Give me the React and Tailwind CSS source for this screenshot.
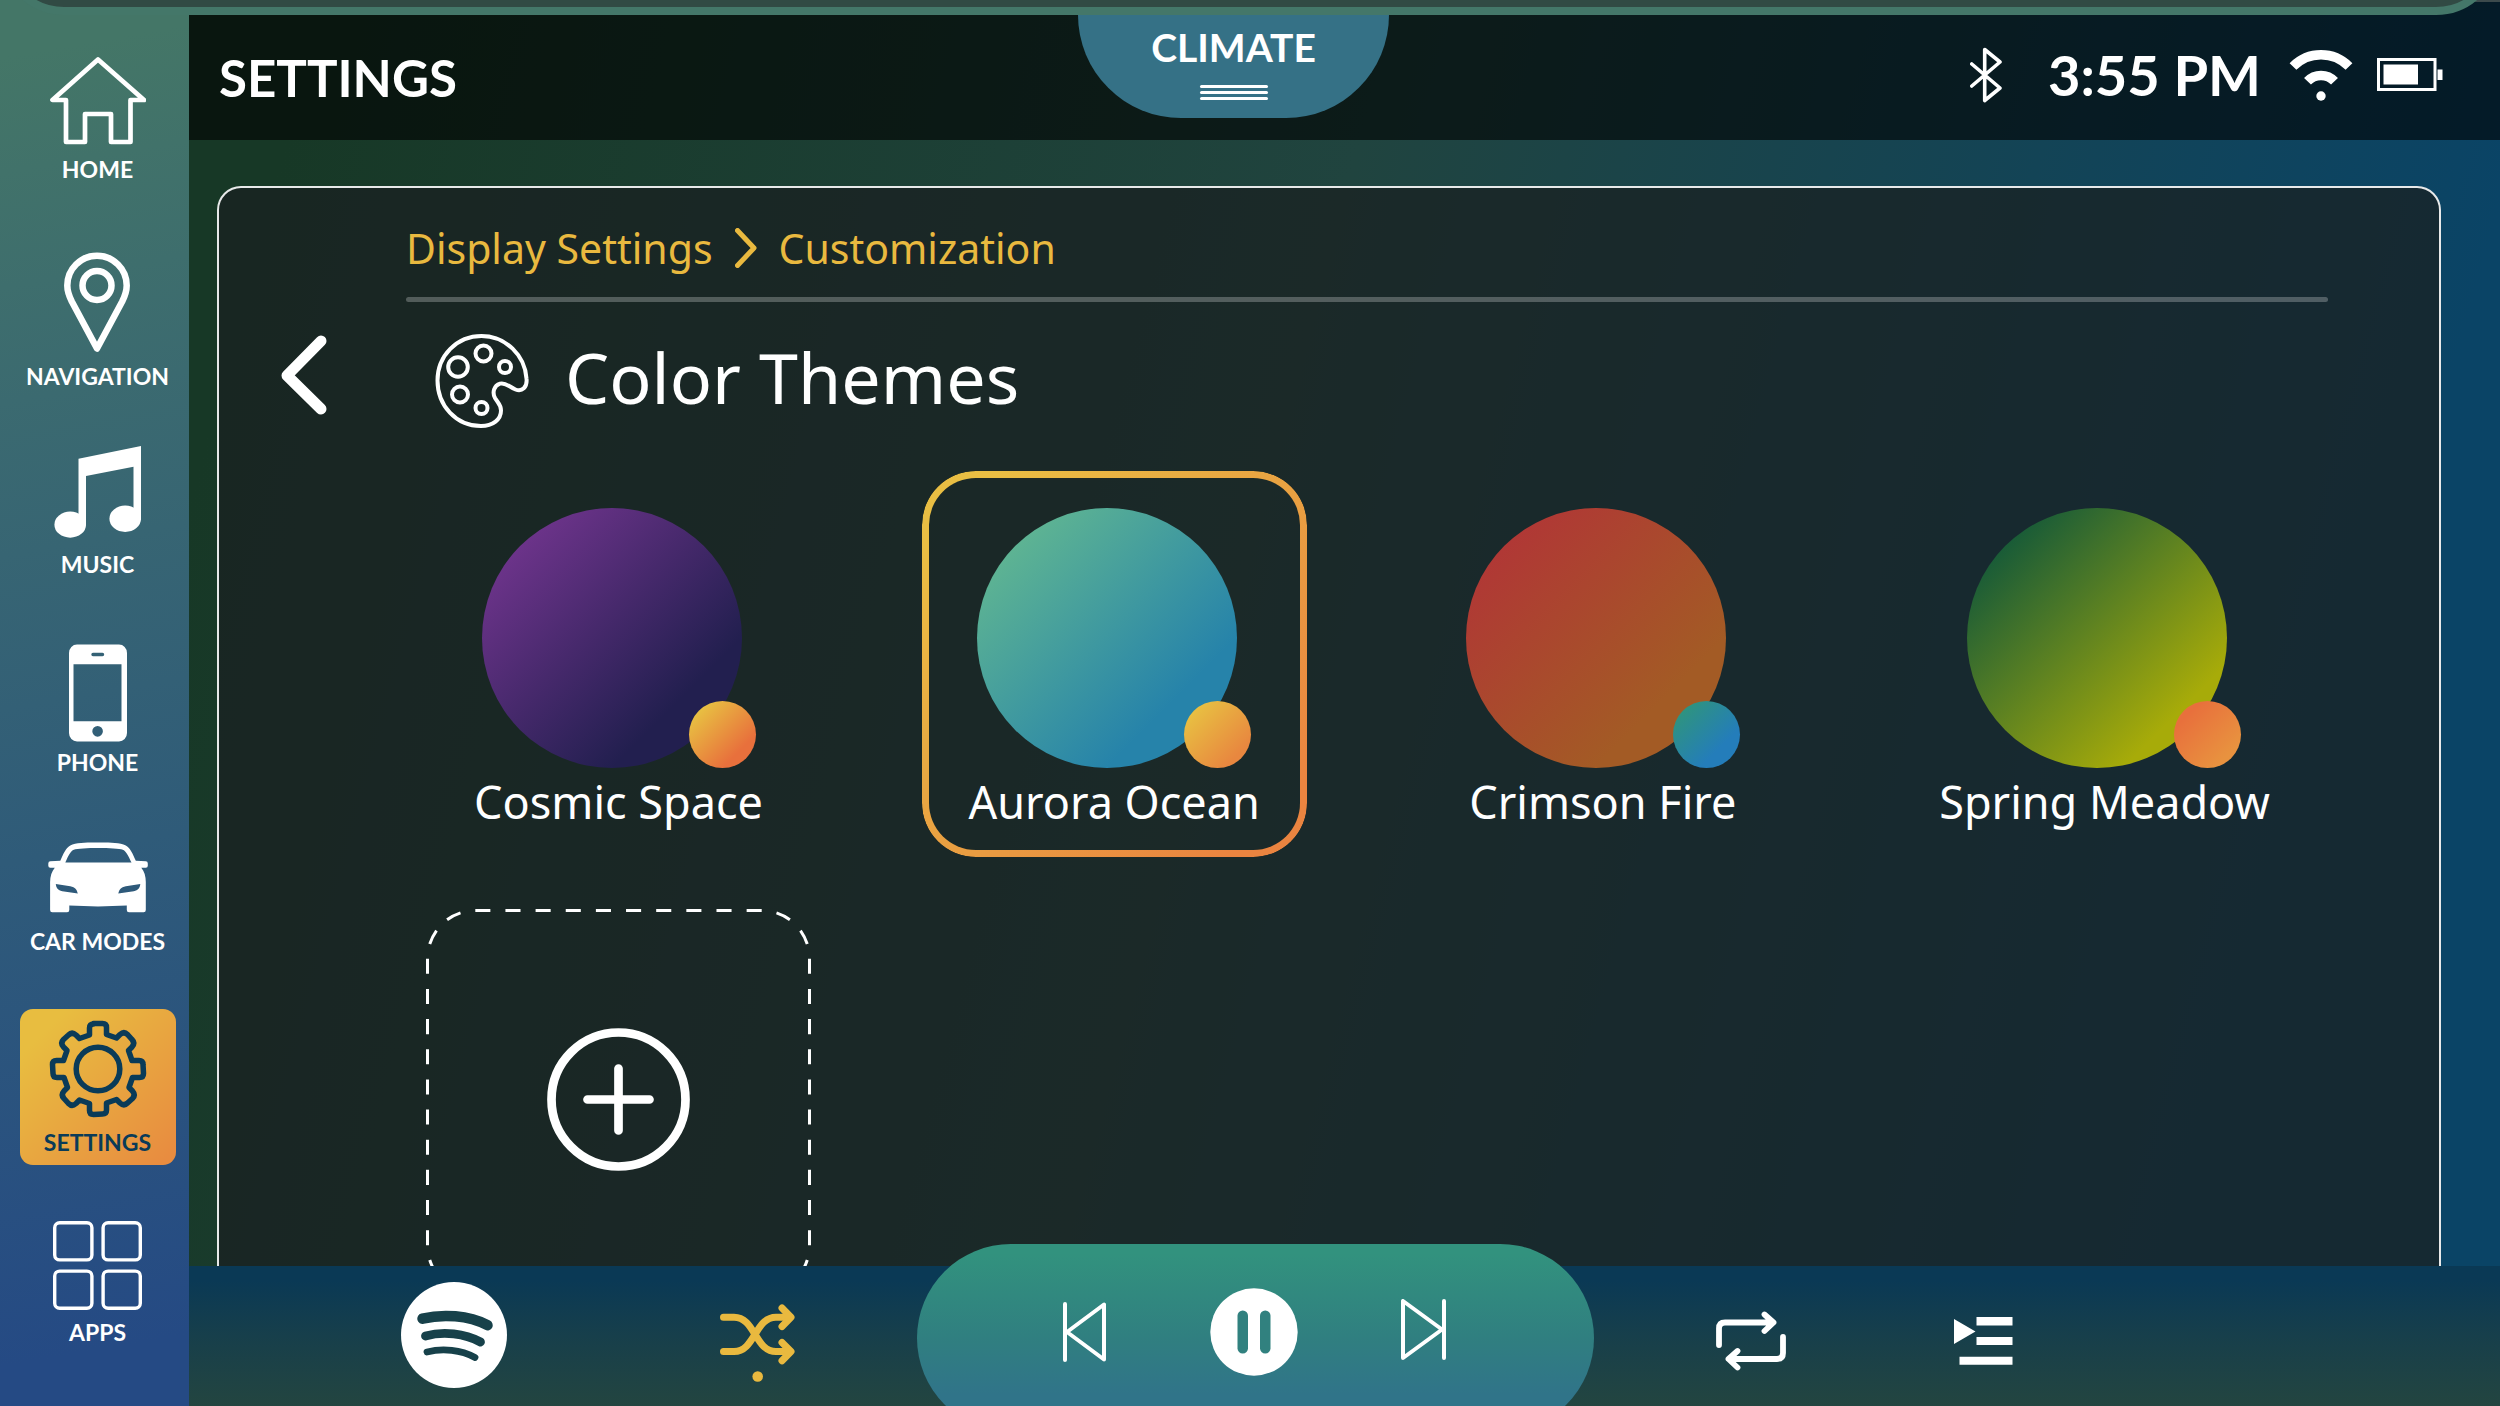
import React from "react";

function HomeIcon() {
  return (
    <svg width="96" height="88" viewBox="52 57 96 88" fill="none" stroke="currentColor" strokeWidth="4.7" strokeLinejoin="round" aria-hidden="true">
      <path d="M100 59.5 54.5 100H68v42h19v-28h26v28h19.500v-42H146z" />
    </svg>
  );
}

function PinIcon() {
  return (
    <svg width="66" height="100" viewBox="65 252 66 100" fill="none" stroke="currentColor" strokeWidth="6.500" strokeLinejoin="round" aria-hidden="true">
      <path d="M68.300 285.500a29.700 29.700 0 0 1 59.400 0c0 6-2 11-4.500 16L98 348.500 72.800 301.500c-2.500-5-4.500-10-4.500-16z" />
      <circle cx="98" cy="285.500" r="14.500" />
    </svg>
  );
}

function MusicIcon() {
  return (
    <svg width="87" height="92" viewBox="54 443 87 86" preserveAspectRatio="none" fill="currentColor" aria-hidden="true">
      <path d="M78.500 455 141 443v69h-7.500v-49.500L86 471v46h-7.500z" />
      <ellipse cx="70.200" cy="516.500" rx="15.800" ry="12.200" />
      <ellipse cx="125.200" cy="511" rx="15.800" ry="12.300" />
    </svg>
  );
}

function PhoneIcon() {
  return (
    <svg width="58" height="98" viewBox="69 627.500 58 92" preserveAspectRatio="none" fill="currentColor" fillRule="evenodd" aria-hidden="true">
      <path d="M77 628h42a8 8 0 0 1 8 8v75a8 8 0 0 1-8 8H77a8 8 0 0 1-8-8v-75a8 8 0 0 1 8-8zM73.500 646.500v53.500h48v-53.500zM93 635.700a1.700 1.700 0 0 0 0 3.400h9.500a1.700 1.700 0 0 0 0-3.400zM92.300 709.500a5.300 5 0 1 0 10.600 0a5.300 5 0 1 0-10.600 0z" />
    </svg>
  );
}

function CarIcon() {
  return (
    <svg width="100" height="71" viewBox="47.700 812.300 100 67" preserveAspectRatio="none" fill="currentColor" fillRule="evenodd" aria-hidden="true">
      <path d="M60 830C63 823 66 817.500 70 815.500C76 812.500 88 812.700 97.700 812.700C107.500 812.700 119 812.500 125.500 815.500C129.500 817.500 132.500 823 135.500 830L145.500 830.500Q147.500 830.500 147.500 832.500V834.700Q147.500 836.700 145.500 836.700H141C144 840 145.500 845 145.500 850V876.500Q145.500 878.700 143.300 878.700H128.700Q126.500 878.700 126.500 876.500V872.300Q97.700 873.800 69 872.300V876.500Q69 878.700 66.800 878.700H52Q49.800 878.700 49.800 876.500V850C49.800 845 51.500 840 54.500 836.700H50Q48 836.700 48 834.700V832.500Q48 830.500 50 830.500zM65 831.700H131.200C128 825 125.500 820.500 122.500 819.500C116 817.300 80 817.300 73.500 819.500C70.500 820.500 68 825 65 831.700zM55.500 852L70 854C75 855 76.500 857 77.500 861L62 858.700C57.500 857.800 56 856 55.500 852zM140 852L125.500 854C120.500 855 119 857 118 861L133.500 858.700C138 857.800 139.500 856 140 852z" />
    </svg>
  );
}

const gearQuadrant = [
  ["L", 4.5, -45.5],
  ["Q", 8.5, -45.5, 8.5, -41.5],
  ["L", 8.5, -34.5],
  ["L", 18.5, -31],
  ["L", 22, -34.5],
  ["Q", 26, -38, 29.5, -34.5],
  ["L", 34, -29.5],
  ["Q", 37.5, -26, 34, -22],
  ["L", 30.5, -18.5],
  ["L", 34, -8.5],
  ["L", 41, -8.5],
  ["Q", 45, -8.5, 45, -4.5],
];

function buildGearPath() {
  const turn = (x, y, n) => (n === 0 ? [x, y] : turn(-y, x, n - 1));
  let d = "M-4.500 -45.500";
  for (let q = 0; q < 4; q++) {
    for (const [cmd, ...n] of gearQuadrant) {
      const points = [];
      for (let i = 0; i < n.length; i += 2) points.push(turn(n[i], n[i + 1], q).join(" "));
      d += ` ${cmd}${points.join(" ")}`;
    }
  }
  return d + "z";
}

function GearIcon() {
  return (
    <svg width="98" height="98" viewBox="-49 -49 98 98" fill="none" stroke="currentColor" strokeWidth="5.500" strokeLinejoin="round" aria-hidden="true">
      <path d={buildGearPath()} />
      <circle r="21.800" />
    </svg>
  );
}

function AppsIcon() {
  return (
    <svg width="89" height="89" viewBox="0 0 89 89" fill="none" stroke="currentColor" strokeWidth="3.400" aria-hidden="true">
      <rect x="1.700" y="1.700" width="37.200" height="37.200" rx="5" />
      <rect x="50.100" y="1.700" width="37.200" height="37.200" rx="5" />
      <rect x="1.700" y="50.100" width="37.200" height="37.200" rx="5" />
      <rect x="50.100" y="50.100" width="37.200" height="37.200" rx="5" />
    </svg>
  );
}

function BluetoothIcon() {
  return (
    <svg width="32" height="56" viewBox="1968 47 32 56" fill="none" stroke="currentColor" strokeWidth="3.600" strokeLinecap="round" strokeLinejoin="round" aria-label="Bluetooth">
      <path d="M1969.800 64 1998 88 1982.700 100.500V49.500L1998 62 1969.800 86" />
    </svg>
  );
}

function WifiIcon() {
  return (
    <svg width="64" height="52" viewBox="-32 -45 64 52" fill="none" stroke="currentColor" aria-label="Wi-Fi">
      <path d="M-28 -27.500A39.300 39.300 0 0 1 28 -27.500" strokeWidth="9.500" />
      <path d="M-13.500 -12.800A18.600 18.600 0 0 1 13.500 -12.800" strokeWidth="9.500" />
      <circle cy="2" r="4.700" fill="currentColor" stroke="none" />
    </svg>
  );
}

function BatteryIcon() {
  return (
    <svg width="66" height="33" viewBox="0 0 66 33" fill="currentColor" aria-label="Battery">
      <rect x="1.500" y="1.500" width="56.500" height="30" fill="none" stroke="currentColor" strokeWidth="3" />
      <rect x="6.500" y="6.500" width="34.500" height="20" />
      <rect x="60.500" y="11.500" width="5" height="10.500" />
    </svg>
  );
}

function PaletteIcon() {
  return (
    <svg width="94" height="94" viewBox="435 334.500 94 94" fill="none" stroke="currentColor" strokeWidth="4" strokeLinejoin="round" aria-hidden="true">
      <path d="M526.500 379C527.500 388 522 392.500 515.500 390C509 387.500 506 382.500 500 384.200C494 386 492 393 495 398.500C498 403.500 501 405 501 411C501 420 493 426.500 481 426.500C456 426.500 437.500 406 437.500 381C437.500 356 457 336.500 481.500 336.500C506 336.500 525 356 526.500 379z" />
      <circle cx="458" cy="367.500" r="9.800" />
      <circle cx="483.500" cy="354" r="8" />
      <circle cx="505" cy="367.500" r="6" />
      <circle cx="460" cy="395" r="8" />
      <circle cx="481.500" cy="408.500" r="6" />
    </svg>
  );
}

function SpotifyIcon() {
  return (
    <svg width="106" height="106" viewBox="401.500 1281 106 106" fill="none" stroke="#17414a" strokeLinecap="round" aria-hidden="true">
      <circle cx="454.500" cy="1334" r="53" fill="#fff" stroke="none" />
      <path d="M423 1317.700c20-5 46-3.500 65 6.500" strokeWidth="10.500" />
      <path d="M426 1335c18-5 39-2.500 55 6" strokeWidth="8.800" />
      <path d="M427.500 1351c16-4 34-2 48 5.500" strokeWidth="6.800" />
    </svg>
  );
}

function ShuffleIcon() {
  return (
    <svg width="76" height="78" viewBox="720 1302.500 76 78" fill="none" stroke="currentColor" strokeWidth="7" strokeLinecap="round" strokeLinejoin="round" aria-hidden="true">
      <path d="M723.500 1315.700h10.500c21 0 21 34.300 42 34.300h13M723.500 1350h10.500c21 0 21-34.300 42-34.300h13" />
      <path d="M782 1306.500 791 1315.700 782 1325M782 1341l9 9-9 9.300" />
      <circle cx="757.700" cy="1375" r="5.300" fill="currentColor" stroke="none" />
    </svg>
  );
}

function PreviousIcon() {
  return (
    <svg width="44" height="60" viewBox="1062 1303 44 60" fill="none" stroke="currentColor" strokeWidth="4" strokeLinecap="round" strokeLinejoin="round" aria-hidden="true">
      <path d="M1064 1305v56M1066 1333l37-27.500v55z" />
    </svg>
  );
}

function NextIcon() {
  return (
    <svg width="45" height="62" viewBox="1402 1299 45 62" fill="none" stroke="currentColor" strokeWidth="4" strokeLinecap="round" strokeLinejoin="round" aria-hidden="true">
      <path d="M1445 1301v57M1443 1329.500l-39-28.500v57z" />
    </svg>
  );
}

function PauseIcon() {
  return (
    <svg width="88" height="88" viewBox="0 0 88 88" aria-hidden="true">
      <circle cx="44" cy="44" r="43.700" fill="#fff" />
      <rect x="27.500" y="22.500" width="10.500" height="43" rx="5.200" fill="#31817f" />
      <rect x="50" y="22.500" width="10.500" height="43" rx="5.200" fill="#31817f" />
    </svg>
  );
}

function RepeatIcon() {
  return (
    <svg width="70" height="60" viewBox="1716 1310.500 70 60" fill="none" stroke="currentColor" strokeWidth="5.800" strokeLinecap="round" strokeLinejoin="round" aria-hidden="true">
      <path d="M1719 1344.500V1328q0-6 6-6h48M1764.500 1314l9 8-9 8.500" />
      <path d="M1783 1336.500V1352.500q0 6-6 6h-48M1737.500 1350.500l-9 8 9 8.500" />
    </svg>
  );
}

function QueueIcon() {
  return (
    <svg width="59" height="48" viewBox="1954.500 1317 59 48" fill="currentColor" aria-hidden="true">
      <path d="M1954.500 1319l21.500 12.500-21.500 12.500zM1977 1317h36v8.500h-36zM1977 1337h36v8h-36zM1960 1356.700h53v8h-53z" />
    </svg>
  );
}

const navItems = [
  { label: "HOME", Icon: HomeIcon, className: "mt-[57px] gap-3" },
  { label: "NAVIGATION", Icon: PinIcon, className: "mt-[71px] gap-3" },
  { label: "MUSIC", Icon: MusicIcon, className: "mt-[58px] gap-[14px]" },
  { label: "PHONE", Icon: PhoneIcon, className: "mt-[68px] gap-2" },
  { label: "CAR MODES", Icon: CarIcon, className: "mt-[68px] gap-4" },
  { label: "SETTINGS", Icon: GearIcon, active: true, className: "mt-[56px] gap-3" },
  { label: "APPS", Icon: AppsIcon, className: "mt-[56px] gap-[10px]" },
];

const themes = [
  {
    name: "Cosmic Space",
    main: "bg-[linear-gradient(135deg,#6b3389_15%,#221f4f_75%)]",
    accent: "bg-[linear-gradient(135deg,#e8bf42_15%,#e8703c_75%)]",
  },
  {
    name: "Aurora Ocean",
    selected: true,
    main: "bg-[linear-gradient(135deg,#5db393_15%,#2683aa_75%)]",
    accent: "bg-[linear-gradient(135deg,#e8bf42_15%,#e8873f_80%)]",
  },
  {
    name: "Crimson Fire",
    main: "bg-[linear-gradient(135deg,#b03835_15%,#a35b25_75%)]",
    accent: "bg-[linear-gradient(135deg,#2f957b_10%,#247dba_70%)]",
  },
  {
    name: "Spring Meadow",
    main: "bg-[linear-gradient(135deg,#1a5c37_15%,#a7ab09_80%)]",
    accent: "bg-[linear-gradient(135deg,#e8703c_20%,#e8923f_80%)]",
  },
];

function Sidebar() {
  return (
    <nav className="w-[189px] shrink-0 bg-[linear-gradient(170deg,#447667_4%,#3b6a70_28%,#2f5b79_60%,#254a84_95%)]" aria-label="Main">
      <ul className="flex flex-col items-center pl-[6px] text-[23px] leading-6 font-bold">
        {navItems.map(({ label, Icon, active, className }) => (
          <li key={label}>
            <a
              href={"#" + label.toLowerCase().replace(" ", "-")}
              aria-current={active ? "page" : undefined}
              className={
                "flex flex-col items-center whitespace-nowrap " +
                className +
                (active
                  ? " h-[156px] w-[156px] rounded-[13px] bg-[linear-gradient(135deg,#e8bd40_15%,#e88c40_95%)] pt-[11px] text-[#0a3b58]"
                  : "")
              }
            >
              <Icon />
              <span>{label}</span>
            </a>
          </li>
        ))}
      </ul>
    </nav>
  );
}

function Header() {
  return (
    <header className="grid h-[140px] shrink-0 grid-cols-[889fr_311px_1111fr] border-t-2 border-[#3c4a4c] bg-black/60 pt-[13px]">
      <h1 className="self-center pl-[30px] text-[51px] leading-[60px] font-bold">SETTINGS</h1>
      <button type="button" className="flex h-[103px] flex-col items-center rounded-b-[103px] bg-[#357186] text-[39px] leading-[48px] font-bold">
        <span className="mt-2">CLIMATE</span>
        <span className="mt-[14px] flex flex-col gap-[3px]" aria-hidden="true">
          <span className="h-[3px] w-[68px] rounded-full bg-white" />
          <span className="h-[3px] w-[68px] rounded-full bg-white" />
          <span className="h-[3px] w-[68px] rounded-full bg-white" />
        </span>
      </button>
      <div className="flex items-center justify-end pr-[57px] pb-[6px]">
        <BluetoothIcon />
        <time className="ml-[46px] text-[56px] leading-[64px] font-bold">3:55 PM</time>
        <span className="ml-7 flex items-center gap-6">
          <WifiIcon />
          <BatteryIcon />
        </span>
      </div>
    </header>
  );
}

function ThemeCard({ name, main, accent, selected }) {
  return (
    <button type="button" aria-pressed={!!selected} className="relative flex h-[386px] w-[385px] flex-col items-center pt-[37px]">
      {selected && (
        <span className="absolute inset-0 rounded-[54px] bg-[linear-gradient(135deg,#e9be43_10%,#ea8440_90%)] p-[7px] [mask:linear-gradient(#000_0_0)_content-box_exclude,linear-gradient(#000_0_0)]" />
      )}
      <span className="flex w-[274px] items-end">
        <span className={"size-[260px] shrink-0 rounded-full " + main} />
        <span className={"-ml-[53px] size-[67px] shrink-0 rounded-full " + accent} />
      </span>
      <span className="mt-2 text-[45px] leading-[52px] whitespace-nowrap">{name}</span>
    </button>
  );
}

function AddThemeCard() {
  return (
    <button type="button" aria-label="Add theme" className="flex h-[386px] w-[385px] items-center justify-center">
      <svg width="385" height="386" viewBox="0 0 385 386" fill="none" stroke="#fff" strokeLinecap="round" aria-hidden="true">
        <path
          d="M192.500 1.500H50A48 48 0 0 0 1.500 49.500V336.500A48 48 0 0 0 49.500 384.500H335.500A48 48 0 0 0 383.500 336.500V49.500A48 48 0 0 0 335.500 1.500z"
          strokeWidth="3"
          strokeLinecap="butt"
          pathLength="96"
          strokeDasharray="1 1"
          strokeDashoffset="1.500"
        />
        <circle cx="192.500" cy="190.500" r="67" strokeWidth="8.700" />
        <path d="M192.500 159.500v62M161.500 190.500h62" strokeWidth="8.700" />
      </svg>
    </button>
  );
}

function SettingsPanel() {
  return (
    <main className="min-h-0 flex-1 overflow-hidden pt-[46px] pr-[59px] pl-7 font-['Noto_Sans',sans-serif]">
      <section className="min-h-[1250px] rounded-3xl border-2 border-white/90 bg-[#192022]/75 pt-[34px] pr-[111px] pl-[62px]">
        <div className="ml-[125px]">
          <ol className="flex items-center gap-[22px] text-[41px] leading-[52px] text-[#e9b93f]">
            <li>
              <a href="#display">Display Settings</a>
            </li>
            <li aria-hidden="true">
              <svg width="22" height="40" viewBox="0 0 22 40" fill="none" stroke="currentColor" strokeWidth="5" strokeLinecap="round" strokeLinejoin="round">
                <path d="M2.500 2.500 19 20 2.500 37.500" />
              </svg>
            </li>
            <li>
              <a href="#customization" aria-current="page">Customization</a>
            </li>
          </ol>
          <hr className="mt-[23px] h-[5px] rounded-full border-0 bg-white/25" />
        </div>
        <div className="mt-[31px] flex items-center">
          <button type="button" aria-label="Back" className="mb-3">
            <svg width="46" height="80" viewBox="280.500 335 46 80" fill="none" stroke="currentColor" strokeWidth="11" strokeLinecap="round" strokeLinejoin="round">
              <path d="M320.500 341 286.500 375.500 320.500 409" />
            </svg>
          </button>
          <h2 className="ml-[108px] flex items-center gap-9 text-[70px] leading-[88px]">
            <PaletteIcon />
            <span className="pb-2">Color Themes</span>
          </h2>
        </div>
        <div className="mr-[31px] ml-[145px] grid grid-cols-[496fr_489fr_502fr_385fr] gap-y-[52px] pt-[42px]">
          {themes.map((theme) => (
            <ThemeCard key={theme.name} {...theme} />
          ))}
          <AddThemeCard />
        </div>
      </section>
    </main>
  );
}

function PlayerBar() {
  return (
    <footer className="relative grid h-[140px] shrink-0 grid-cols-[728fr_677px_906fr] grid-rows-[140px] bg-[linear-gradient(180deg,#0a3955_10%,#173f4b_50%,#234540)]">
      <div className="flex items-center gap-[213px] pb-[3px] pl-[212px]">
        <button type="button" aria-label="Spotify">
          <SpotifyIcon />
        </button>
        <button type="button" aria-label="Shuffle" className="pt-4 text-[#e9b93f]">
          <ShuffleIcon />
        </button>
      </div>
      <div className="-mt-[22px] flex h-[188px] items-center justify-center gap-[103px] rounded-full bg-[linear-gradient(180deg,#32927e_5%,#307f80_50%,#307489_80%)] pr-[2px] pb-3">
        <button type="button" aria-label="Previous">
          <PreviousIcon />
        </button>
        <button type="button" aria-label="Pause">
          <PauseIcon />
        </button>
        <button type="button" aria-label="Next" className="pb-1">
          <NextIcon />
        </button>
      </div>
      <div className="flex items-center gap-[168px] pt-[10px] pl-[122px]">
        <button type="button" aria-label="Repeat">
          <RepeatIcon />
        </button>
        <button type="button" aria-label="Queue">
          <QueueIcon />
        </button>
      </div>
    </footer>
  );
}

export default function App() {
  return (
    <div className="relative flex h-screen overflow-hidden font-['Lato',sans-serif] text-white">
      <Sidebar />
      <div className="flex min-w-0 flex-1 flex-col bg-[linear-gradient(105deg,#173826_5%,#20443f_45%,#0a4466_88%)]">
        <Header />
        <SettingsPanel />
        <PlayerBar />
      </div>
      <div className="absolute inset-x-0 -top-[85px] h-[100px] rounded-b-[64px] border-8 border-[#447769] bg-[#314a44]" />
    </div>
  );
}
